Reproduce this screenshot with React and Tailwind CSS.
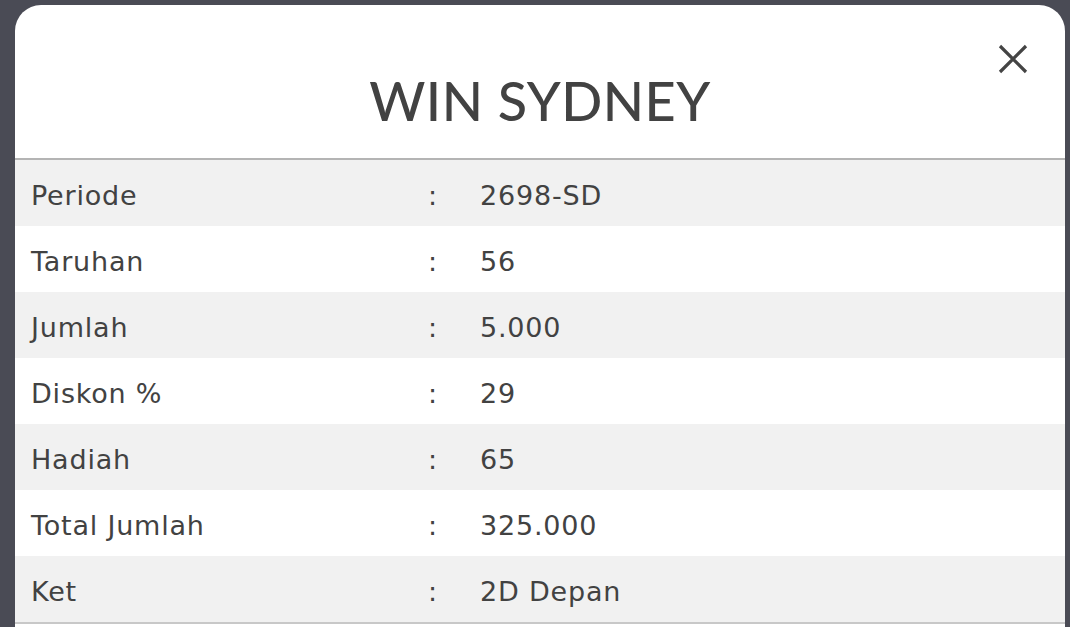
const rows = [
  ['Periode', '2698-SD'],
  ['Taruhan', '56'],
  ['Jumlah', '5.000'],
  ['Diskon %', '29'],
  ['Hadiah', '65'],
  ['Total Jumlah', '325.000'],
  ['Ket', '2D Depan'],
]

export default function App() {
  return (
    <div className="h-[627px] overflow-hidden bg-[#4a4b55] pl-[15px] pr-[5px] pt-[5px] text-[#424242]">
      <div className="bg-white rounded-t-[26px] min-h-[700px]">
        {/* Header */}
        <div className="relative h-[155px] pt-[38px] flex items-center justify-center border-b-2 border-[#b4b4b4]">
          <h2 className="text-[54px] font-medium tracking-[0.5px] font-['Lato',sans-serif]">WIN SYDNEY</h2>
          <button className="absolute right-[36px] top-[38px] text-[#444]">
            <svg width="32" height="32" viewBox="0 0 32 32" fill="none" stroke="currentColor" strokeWidth="3.2">
              <path d="M3 3 L29 29 M29 3 L3 29" />
            </svg>
          </button>
        </div>
        {/* Rows */}
        <div className="border-b-2 border-[#c8c8c8] font-['DejaVu_Sans',sans-serif]">
          {rows.map(([label, value], i) => (
            <div
              key={label}
              className={`h-[66px] flex items-center pl-4 pt-[7px] text-[27px] tracking-[0.8px] ${i % 2 === 0 ? 'bg-[#f1f1f1]' : 'bg-white'}`}
            >
              <div className="w-[397px]">{label}</div>
              <div className="w-[52px]">:</div>
              <div>{value}</div>
            </div>
          ))}
        </div>
      </div>
    </div>
  )
}
